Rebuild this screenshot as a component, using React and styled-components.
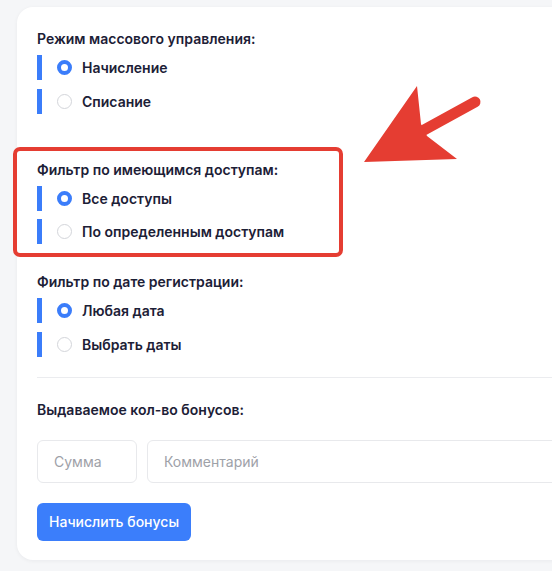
import React, { useState } from "react";
import styled, { createGlobalStyle } from "styled-components";

const GlobalStyle = createGlobalStyle`
  html, body {
    margin: 0;
    padding: 0;
    background: #f5f6f8;
    overflow: hidden;
  }
  body {
    font-family: Inter, "Noto Sans", sans-serif;
    color: #1c2036;
  }
`;

const Page = styled.div`
  padding: 7px 0 12px 17px;
`;

const Card = styled.div`
  width: 640px;
  background: #fff;
  border-radius: 16px;
  box-shadow: 0 1px 4px rgba(20, 24, 40, 0.05);
  padding: 22px 20px 19px;
  box-sizing: border-box;
`;

const Group = styled.div`
  display: flex;
  flex-direction: column;
  position: relative;
  margin-top: ${(p) => p.$space || 0}px;
`;

// red annotation frame drawn over the highlighted group
const Annotation = styled.div`
  position: absolute;
  left: -24px;
  top: -13px;
  width: 330px;
  bottom: -13px;
  border: 4px solid #e53d32;
  border-radius: 7px;
  box-sizing: border-box;
  pointer-events: none;
`;

const Arrow = styled.svg`
  position: absolute;
  left: 310px;
  top: -90px;
  pointer-events: none;
`;

const Heading = styled.div`
  font-size: 14px;
  font-weight: 600;
  line-height: 20px;
  margin-bottom: 6px;
`;

const Options = styled.div`
  display: flex;
  flex-direction: column;
  gap: 8.5px;
`;

const Option = styled.label`
  display: flex;
  align-items: center;
  height: 25px;
  font-size: 14px;
  font-weight: 600;
  cursor: pointer;

  &::before {
    content: "";
    width: 5px;
    align-self: stretch;
    background: #3b7dfa;
    margin-right: 15px;
  }
`;

const Radio = styled.span`
  width: 15px;
  height: 15px;
  border-radius: 50%;
  box-sizing: border-box;
  border: ${(p) => (p.$checked ? "4px solid #3b7dfa" : "1px solid #d3d5da")};
  background: #fff;
  margin-right: 10px;
  flex-shrink: 0;
`;

const Divider = styled.hr`
  border: none;
  border-top: 1px solid #ebecef;
  margin: 20px 0 22px;
`;

const Fields = styled.div`
  display: flex;
  gap: 10px;
  margin-top: 20px;
`;

const Input = styled.input`
  height: 43px;
  width: ${(p) => p.$width || "100px"};
  flex: ${(p) => (p.$grow ? 1 : "none")};
  box-sizing: border-box;
  border: 1px solid #e8e9ec;
  border-radius: 6px;
  padding: 0 16px;
  font-family: inherit;
  font-size: 14px;
  color: #1c2036;
  outline: none;

  &::placeholder {
    color: #9ea1a8;
  }
`;

const Button = styled.button`
  margin-top: 20px;
  height: 38px;
  padding: 0 12px;
  border: none;
  border-radius: 6px;
  background: #3b7efb;
  color: #fff;
  font-family: inherit;
  font-size: 14px;
  font-weight: 500;
  cursor: pointer;
`;

const RadioGroup = ({ title, options, value, onChange }) => (
  <>
    <Heading>{title}</Heading>
    <Options>
      {options.map((o, i) => (
        <Option key={o} onClick={() => onChange(i)}>
          <Radio $checked={value === i} />
          {o}
        </Option>
      ))}
    </Options>
  </>
);

export default function App() {
  const [mode, setMode] = useState(0);
  const [access, setAccess] = useState(0);
  const [date, setDate] = useState(0);

  return (
    <Page>
      <GlobalStyle />
      <Card>
        <Group>
          <RadioGroup
            title="Режим массового управления:"
            options={["Начисление", "Списание"]}
            value={mode}
            onChange={setMode}
          />
        </Group>
        <Group $space={46}>
          <Annotation />
          <Arrow width="140" height="100" viewBox="0 0 140 100">
            <line
              x1="77"
              y1="60"
              x2="128"
              y2="32"
              stroke="#e53d32"
              strokeWidth="11"
              strokeLinecap="round"
            />
            <polygon points="17,92 70,16 74,54 80,66 110,89" fill="#e53d32" />
          </Arrow>
          <RadioGroup
            title="Фильтр по имеющимся доступам:"
            options={["Все доступы", "По определенным доступам"]}
            value={access}
            onChange={setAccess}
          />
        </Group>
        <Group $space={28}>
          <RadioGroup
            title="Фильтр по дате регистрации:"
            options={["Любая дата", "Выбрать даты"]}
            value={date}
            onChange={setDate}
          />
        </Group>
        <Divider />
        <Heading>Выдаваемое кол-во бонусов:</Heading>
        <Fields>
          <Input $width="100px" placeholder="Сумма" />
          <Input $grow placeholder="Комментарий" />
        </Fields>
        <Button>Начислить бонусы</Button>
      </Card>
    </Page>
  );
}
